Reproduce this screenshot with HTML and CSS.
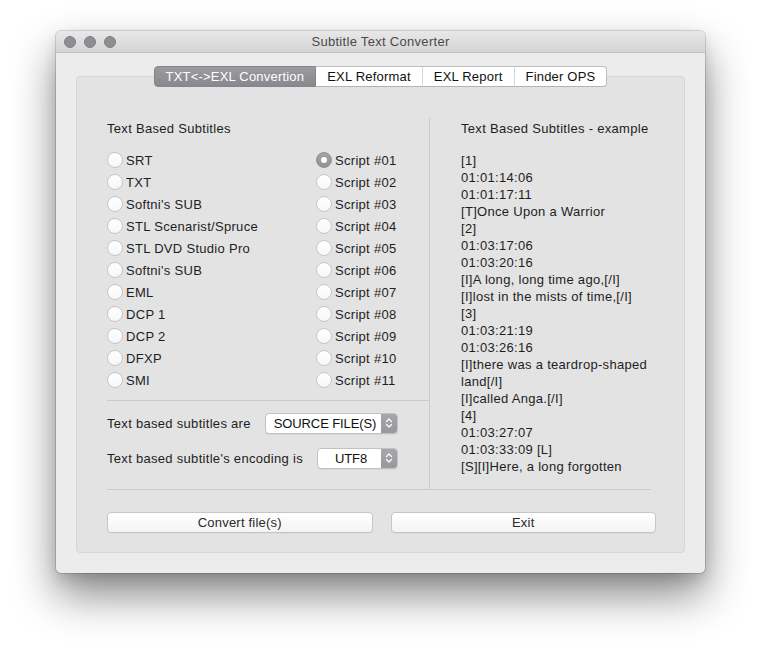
FILE: index.html
```html
<!DOCTYPE html>
<html>
<head>
<meta charset="utf-8">
<title>Subtitle Text Converter</title>
<link rel="stylesheet" href="styles.css">
</head>
<body>
<div class="stage">
  <div class="window">
    <div class="titlebar">
      <div class="lights">
        <span class="light"></span><span class="light"></span><span class="light"></span>
      </div>
      <div class="title">Subtitle Text Converter</div>
      <div></div>
    </div>
    <div class="content">
      <div class="tabs">
        <div class="tab selected">TXT&lt;-&gt;EXL Convertion</div>
        <div class="tab">EXL Reformat</div>
        <div class="tab">EXL Report</div>
        <div class="tab">Finder OPS</div>
      </div>
      <div class="box">
        <div class="panes">
          <div class="left">
            <div class="heading">Text Based Subtitles</div>
            <div class="radios">
              <div class="col first">
                <div class="radio"><span class="dot"></span>SRT</div>
                <div class="radio"><span class="dot"></span>TXT</div>
                <div class="radio"><span class="dot"></span>Softni's SUB</div>
                <div class="radio"><span class="dot"></span>STL Scenarist/Spruce</div>
                <div class="radio"><span class="dot"></span>STL DVD Studio Pro</div>
                <div class="radio"><span class="dot"></span>Softni's SUB</div>
                <div class="radio"><span class="dot"></span>EML</div>
                <div class="radio"><span class="dot"></span>DCP 1</div>
                <div class="radio"><span class="dot"></span>DCP 2</div>
                <div class="radio"><span class="dot"></span>DFXP</div>
                <div class="radio"><span class="dot"></span>SMI</div>
              </div>
              <div class="col">
                <div class="radio"><span class="dot on"></span>Script #01</div>
                <div class="radio"><span class="dot"></span>Script #02</div>
                <div class="radio"><span class="dot"></span>Script #03</div>
                <div class="radio"><span class="dot"></span>Script #04</div>
                <div class="radio"><span class="dot"></span>Script #05</div>
                <div class="radio"><span class="dot"></span>Script #06</div>
                <div class="radio"><span class="dot"></span>Script #07</div>
                <div class="radio"><span class="dot"></span>Script #08</div>
                <div class="radio"><span class="dot"></span>Script #09</div>
                <div class="radio"><span class="dot"></span>Script #10</div>
                <div class="radio"><span class="dot"></span>Script #11</div>
              </div>
            </div>
            <div class="options">
              <div class="optrow">
                <span>Text based subtitles are</span>
                <div class="popup wide">
                  <span class="ptext">SOURCE FILE(S)</span>
                  <span class="parrow"><svg width="16" height="20" viewBox="0 0 16 20"><path d="M5.5 8.5 L8 6 L10.5 8.5 M5.5 11.5 L8 14 L10.5 11.5" fill="none" stroke="#fff" stroke-width="1.2" stroke-linecap="round" stroke-linejoin="round"/></svg></span>
                </div>
              </div>
              <div class="optrow">
                <span>Text based subtitle's encoding is</span>
                <div class="popup narrow">
                  <span class="ptext">UTF8</span>
                  <span class="parrow"><svg width="16" height="20" viewBox="0 0 16 20"><path d="M5.5 8.5 L8 6 L10.5 8.5 M5.5 11.5 L8 14 L10.5 11.5" fill="none" stroke="#fff" stroke-width="1.2" stroke-linecap="round" stroke-linejoin="round"/></svg></span>
                </div>
              </div>
            </div>
          </div>
          <div class="right">
            <div class="heading">Text Based Subtitles - example</div>
            <div class="example">
              <div>[1]</div>
              <div>01:01:14:06</div>
              <div>01:01:17:11</div>
              <div>[T]Once Upon a Warrior</div>
              <div>[2]</div>
              <div>01:03:17:06</div>
              <div>01:03:20:16</div>
              <div>[I]A long, long time ago,[/I]</div>
              <div>[I]lost in the mists of time,[/I]</div>
              <div>[3]</div>
              <div>01:03:21:19</div>
              <div>01:03:26:16</div>
              <div>[I]there was a teardrop-shaped</div>
              <div>land[/I]</div>
              <div>[I]called Anga.[/I]</div>
              <div>[4]</div>
              <div>01:03:27:07</div>
              <div>01:03:33:09 [L]</div>
              <div>[S][I]Here, a long forgotten</div>
            </div>
          </div>
        </div>
        <div class="buttons">
          <button class="btn">Convert file(s)</button>
          <button class="btn">Exit</button>
        </div>
      </div>
    </div>
  </div>
</div>
</body>
</html>
```

FILE: styles.css
```css
* { box-sizing: border-box; }
html, body { margin: 0; padding: 0; background: #ffffff; }
body {
  font-family: "Liberation Sans", Arial, sans-serif;
  font-size: 13px;
  letter-spacing: 0.3px;
  color: #1e1e1e;
}
.stage { padding: 31px 0 0 56px; min-height: 653px; }
.window {
  width: 649px;
  height: 542px;
  background: #ececec;
  border-radius: 5px;
  overflow: hidden;
  box-shadow: 0 0 0 1px rgba(0,0,0,0.14), 0 22px 44px rgba(0,0,0,0.47), 0 6px 14px rgba(0,0,0,0.12);
  display: flex;
  flex-direction: column;
}
.titlebar {
  height: 22px;
  background: linear-gradient(#e9e8e9, #d6d5d6);
  border-bottom: 1px solid #c3c3c3;
  display: grid;
  grid-template-columns: 1fr auto 1fr;
  align-items: center;
}
.lights { display: flex; gap: 8px; padding-left: 8px; }
.light {
  width: 12px; height: 12px; border-radius: 50%;
  background: #8e8e92;
  border: 1px solid #7e7e82;
}
.title { color: #4a4a4a; font-size: 13px; line-height: 22px; }
.content { padding: 13px 20px 20px 20px; flex: 1; display: flex; flex-direction: column; }
.tabs {
  display: flex;
  justify-content: center;
  position: relative;
  z-index: 1;
}
.tab {
  height: 21px;
  line-height: 19px;
  padding: 0 11px;
  letter-spacing: 0.2px;
  background: #ffffff;
  border-top: 1px solid #bdbdbd;
  border-bottom: 1px solid #b3b3b3;
  border-right: 1px solid #d6d6d6;
  color: #111;
}
.tab:last-child { border-right: 1px solid #bdbdbd; border-radius: 0 4px 4px 0; }
.tab.selected {
  background: linear-gradient(#9b9a9f, #89888d);
  color: #ffffff;
  border: 1px solid #85848a;
  border-radius: 4px 0 0 4px;
}
.box {
  margin-top: -11px;
  flex: 1;
  background: #e3e3e3;
  border: 1px solid #d7d7d7;
  border-radius: 4px;
  padding: 41px 28px 19px 30px;
}
.panes {
  display: grid;
  grid-template-columns: 322px 1fr;
  height: 372px;
  margin-right: 5px;
  border-bottom: 1px solid #cbcbcb;
}
.heading { line-height: 17px; padding-top: 2px; }
.radios { display: flex; margin-top: 12px; }
.col { display: flex; flex-direction: column; }
.col.first { width: 209px; }
.radio { height: 22px; display: flex; align-items: center; }
.dot {
  width: 16px; height: 16px; border-radius: 50%;
  background: linear-gradient(#ffffff, #f7f7f7);
  border: 1px solid #c6c6c6;
  margin-right: 3px;
  flex: none;
  display: flex; align-items: center; justify-content: center;
}
.dot.on {
  background: linear-gradient(#a4a4a6, #939396);
  border-color: #8f8f92;
}
.dot.on::after {
  content: "";
  width: 6px; height: 6px; border-radius: 50%;
  background: #ffffff;
}
.options {
  margin-top: 9px;
  border-top: 1px solid #cbcbcb;
  padding-top: 11px;
  display: flex;
  flex-direction: column;
  gap: 13px;
  width: 322px;
}
.optrow {
  width: 291px;
  height: 22px;
  display: flex;
  align-items: center;
  justify-content: space-between;
}
.popup {
  height: 21px;
  display: flex;
  border: 1px solid #c2c2c2;
  border-radius: 4px;
  background: #ffffff;
  overflow: hidden;
  box-shadow: 0 1px 0 rgba(0,0,0,0.05);
}
.popup.wide { width: 133px; }
.popup.narrow { width: 81px; }
.ptext { flex: 1; text-align: center; line-height: 19px; color: #111; padding-left: 3px; letter-spacing: -0.1px; }
.parrow {
  width: 16px;
  background: linear-gradient(#a7a7ab, #98989c);
  display: flex; align-items: center; justify-content: center;
}
.right {
  border-left: 1px solid #cbcbcb;
  padding-left: 31px;
}
.example { margin-top: 15px; line-height: 17px; }
.buttons {
  margin-top: 22px;
  display: grid;
  grid-template-columns: 1fr 1fr;
  gap: 18px;
}
.btn {
  height: 21px;
  font-family: "Liberation Sans", Arial, sans-serif;
  font-size: 13px;
  letter-spacing: 0.2px;
  color: #2a2a2a;
  background: linear-gradient(#ffffff, #f3f3f3);
  border: 1px solid #c6c6c6;
  border-radius: 4px;
  padding: 0;
  box-shadow: 0 1px 0 rgba(0,0,0,0.04);
}
```
